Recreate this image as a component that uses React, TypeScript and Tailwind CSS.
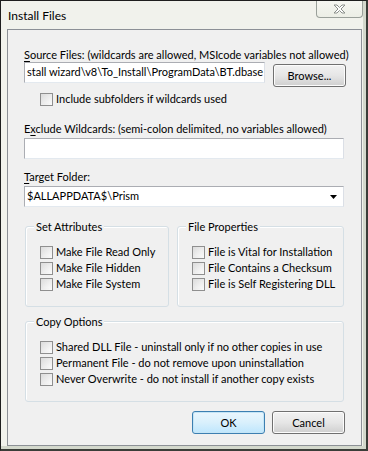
import React from "react";

const Check = ({ label }: { label: string }) => (
  <div className="flex items-center h-[16px]">
    <span className="w-[13px] h-[13px] border border-[#8f8f8f] bg-gradient-to-br from-[#dcdcdc] to-[#fbfbfb] p-[2px] shrink-0">
      <span className="block w-full h-full bg-gradient-to-br from-[#e2e2e2] to-[#f8f8f8]" />
    </span>
    <span className="ml-[3px] whitespace-nowrap leading-[16px]">{label}</span>
  </div>
);

const Button = ({ label, primary }: { label: string; primary?: boolean }) => (
  <button
    className={
      "w-[73px] h-[23px] rounded-[3px] border leading-none " +
      (primary
        ? "border-[#3c7fb1] bg-gradient-to-b from-[#eaf6fd] via-[#d9f0fc] to-[#bee6fd] shadow-[inset_0_0_0_1px_#c4e5f6]"
        : "border-[#707070] bg-gradient-to-b from-[#f2f2f2] via-[#e6e6e6] to-[#cfcfcf] shadow-[inset_0_0_0_1px_#fcfcfc]")
    }
  >
    {label}
  </button>
);

const Group = ({
  title,
  className,
  children,
}: {
  title: string;
  className: string;
  children: React.ReactNode;
}) => (
  <div
    className={
      "relative border border-[#d5dfe5] rounded-[3px] shadow-[inset_1px_1px_0_#ffffff] pl-[14px] pt-[17px] shrink-0 " +
      className
    }
  >
    <span className="absolute -top-[8px] left-[8px] px-[2px] bg-[#f0f0f0] leading-[15px]">
      {title}
    </span>
    {children}
  </div>
);

export default function App() {
  return (
    <div className="w-[368px] h-[451px] bg-[#f1f2ec] border-l border-t border-r-2 border-b-2 border-l-[#1e1e1e] border-t-[#1e1e1e] border-r-[#3a3d38] border-b-[#3a3d38] shadow-[inset_-3px_-3px_0_#d3d8cc] font-['Lato',sans-serif] text-[11px] text-black flex flex-col overflow-hidden">
      <div className="h-[28px] flex items-start shrink-0">
        <span className="ml-[7px] mt-[7px] leading-[16px] text-[12px]">Install Files</span>
        <div className="ml-auto mr-[3px] w-[47px] h-[18px] -mt-px border border-[#9aa09a] border-t-0 rounded-b-[4px] bg-gradient-to-b from-[#f6f7f2] to-[#eceee6] flex items-center justify-center">
          <svg width="13" height="10" viewBox="0 0 13 10">
            <path
              d="M1 1h3l2.5 2.5L9 1h3L8 5l4 4H9L6.5 6.5 4 9H1l4-4z"
              fill="#ffffff"
              stroke="#8a8f8a"
              strokeWidth="1"
              strokeLinejoin="round"
            />
          </svg>
        </div>
      </div>
      <div className="ml-[6px] mr-[4px] h-[417px] shrink-0 border border-[#8c9096] bg-[#f0f0f0] flex flex-col pl-[16px]">
        <div className="mt-[17px] leading-[15px] whitespace-nowrap">
          <span className="underline underline-offset-2">S</span>ource Files: (wildcards are allowed, MSIcode variables not allowed)
        </div>
        <div className="flex items-start">
          <div className="w-[241px] h-[21px] border border-[#abadb3] border-b-[#e3e9ef] border-r-[#dbdfe6] bg-white overflow-hidden flex items-center pl-[2px] whitespace-nowrap">
            stall wizard\v8\To_Install\ProgramData\BT.dbase
          </div>
          <div className="ml-[8px] mt-[2px]">
            <Button label="Browse..." />
          </div>
        </div>
        <div className="mt-[4px] ml-[16px]">
          <Check label="Include subfolders if wildcards used" />
        </div>
        <div className="mt-[14px] leading-[15px] whitespace-nowrap">
          E<span className="underline underline-offset-2">x</span>clude Wildcards: (semi-colon delimited, no variables allowed)
        </div>
        <div className="mt-[2px] w-[320px] h-[21px] border border-[#abadb3] border-b-[#e3e9ef] border-r-[#dbdfe6] bg-white" />
        <div className="mt-[10px] leading-[15px]">
          <span className="underline underline-offset-2">T</span>arget Folder:
        </div>
        <div className="mt-[2px] w-[320px] h-[21px] border border-[#abadb3] border-b-[#e3e9ef] border-r-[#dbdfe6] bg-white flex items-center pl-[2px] pr-[6px]">
          <span className="flex-1">$ALLAPPDATA$\Prism</span>
          <svg width="7" height="4" viewBox="0 0 7 4">
            <path d="M0 0h7L3.5 4z" fill="#000" />
          </svg>
        </div>
        <div className="mt-[19px] ml-[1px] flex gap-[8px]">
          <Group title="Set Attributes" className="w-[144px] h-[81px]">
            <div className="flex flex-col">
              <Check label="Make File Read Only" />
              <Check label="Make File Hidden" />
              <Check label="Make File System" />
            </div>
          </Group>
          <Group title="File Properties" className="w-[167px] h-[81px]">
            <div className="flex flex-col">
              <Check label="File is Vital for Installation" />
              <Check label="File Contains a Checksum" />
              <Check label="File is Self Registering DLL" />
            </div>
          </Group>
        </div>
        <div className="mt-[14px] ml-[1px]">
          <Group title="Copy Options" className="w-[319px] h-[81px]">
            <div className="flex flex-col">
              <Check label="Shared DLL File - uninstall only if no other copies in use" />
              <Check label="Permanent File - do not remove upon uninstallation" />
              <Check label="Never Overwrite - do not install if another copy exists" />
            </div>
          </Group>
        </div>
        <div className="mt-[9px] flex justify-end gap-[7px] pr-[16px]">
          <Button label="OK" primary />
          <Button label="Cancel" />
        </div>
      </div>
    </div>
  );
}
